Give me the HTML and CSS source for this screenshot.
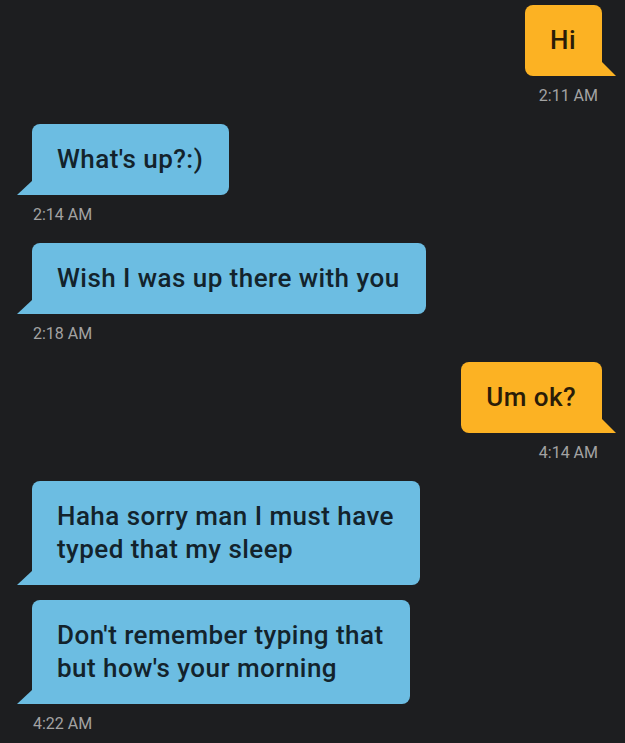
FILE: index.html
```html
<!DOCTYPE html>
<html lang="en">
<head>
    <meta charset="UTF-8">
    <meta name="viewport" content="width=device-width, initial-scale=1.0">
    <title>Chat</title>
    <link rel="stylesheet" href="styles.css">
</head>
<body>
    <div class="chat">
        <div class="msg sent">
            <div class="bubble">Hi</div>
            <div class="time">2:11 AM</div>
        </div>
        <div class="msg received">
            <div class="bubble">What's up?:)</div>
            <div class="time">2:14 AM</div>
        </div>
        <div class="msg received">
            <div class="bubble">Wish I was up there with you</div>
            <div class="time">2:18 AM</div>
        </div>
        <div class="msg sent">
            <div class="bubble">Um ok?</div>
            <div class="time">4:14 AM</div>
        </div>
        <div class="msg received">
            <div class="bubble">Haha sorry man I must have<br>typed that my sleep</div>
            <div class="bubble">Don't remember typing that<br>but how's your morning</div>
            <div class="time">4:22 AM</div>
        </div>
    </div>
</body>
</html>
```

FILE: styles.css
```css
body {
    margin: 0;
    background-color: #1d1e20;
    font-family: Roboto, "Liberation Sans", sans-serif;
}
.chat {
    display: flex;
    flex-direction: column;
    padding: 5px 23px 0 32px;
}
.msg {
    display: flex;
    flex-direction: column;
    margin-bottom: 16px;
}
.msg.sent {
    align-items: flex-end;
}
.msg.received {
    align-items: flex-start;
}
.bubble {
    position: relative;
    padding: 19px 26px 19px 25px;
    font-size: 26px;
    font-weight: 500;
    line-height: 33px;
    letter-spacing: 0.45px;
    border-radius: 8px;
}
.received .bubble {
    background-color: #6cbde2;
    color: #13232c;
    border-bottom-left-radius: 0;
}
.received .bubble + .bubble {
    margin-top: 15px;
}
.sent .bubble {
    background-color: #fcb223;
    color: #2a1c08;
    border-bottom-right-radius: 0;
}
.bubble::after {
    content: "";
    position: absolute;
    bottom: 0;
    width: 0;
    height: 0;
    border-bottom: 14px solid;
}
.received .bubble::after {
    left: -15px;
    border-left: 15px solid transparent;
    border-bottom-color: #6cbde2;
}
.sent .bubble::after {
    right: -14px;
    border-right: 14px solid transparent;
    border-bottom-color: #fcb223;
}
.time {
    margin-top: 8px;
    font-size: 16px;
    line-height: 24px;
    color: #a3a3a3;
}
.received .time {
    padding-left: 1px;
}
.sent .time {
    padding-right: 4px;
}
```
